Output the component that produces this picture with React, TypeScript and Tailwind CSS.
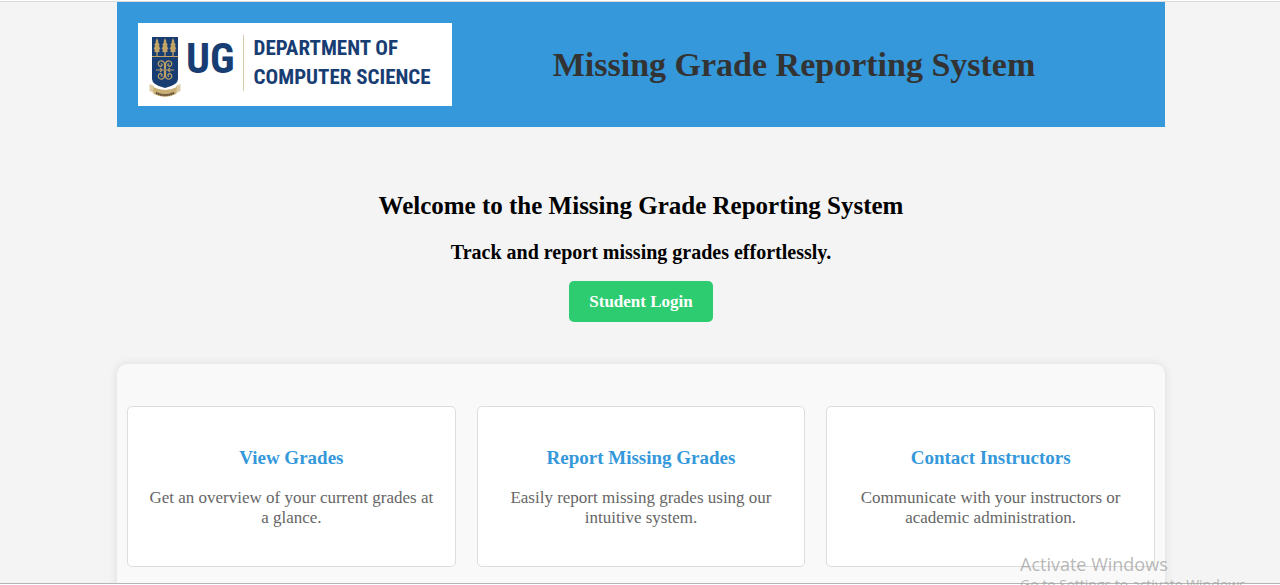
const features = [
  { title: 'View Grades', text: 'Get an overview of your current grades at a glance.' },
  { title: 'Report Missing Grades', text: 'Easily report missing grades using our intuitive system.' },
  { title: 'Contact Instructors', text: 'Communicate with your instructors or academic administration.' },
];

function Tree({ x }: { x: number }) {
  return (
    <path
      transform={`translate(${x} 0)`}
      fill="#c2a467"
      d="M0 2 L1.5 5.5 L1 6 L2.8 9 L1.8 9.600 L3.400 13 L2 13.400 L2.800 15.500 L0.600 16.500 V20 H-0.600 V16.500 L-2.800 15.500 L-2 13.400 L-3.400 13 L-1.800 9.600 L-2.800 9 L-1 6 L-1.500 5.500 Z"
    />
  );
}

function Crest() {
  return (
    <svg viewBox="0 0 32 62" className="mt-1 h-[62px] w-8 shrink-0" aria-hidden="true">
      <path d="M3 1 H29 V43 Q29 49 16 52 Q3 49 3 43 Z" fill="#173d73" />
      <Tree x={8} />
      <Tree x={16} />
      <Tree x={24} />
      <path d="M3 20.5 H29" stroke="#c2a467" strokeWidth="1" />
      <g fill="none" stroke="#c2a467" strokeWidth="1.2">
        <path d="M7 34 H25 M16 27 V42" />
        <path d="M15.5 33 V28 Q15 24.5 11.5 25 Q8.5 26 9.5 29 Q11 31.5 13 29.5 Q13.5 27.5 11.8 27.8" />
        <path d="M16.5 33 V28 Q17 24.5 20.5 25 Q23.5 26 22.5 29 Q21 31.5 19 29.5 Q18.5 27.5 20.2 27.8" />
        <path d="M15.5 35 V40 Q15 43.5 11.5 43 Q8.5 42 9.5 39 Q11 36.5 13 38.5 Q13.5 40.5 11.8 40.2" />
        <path d="M16.5 35 V40 Q17 43.5 20.5 43 Q23.5 42 22.5 39 Q21 36.5 19 38.5 Q18.5 40.5 20.2 40.2" />
        <path d="M11 32 Q14 34 11 36 M21 32 Q18 34 21 36" />
      </g>
      <path d="M0.5 48 L5 50 V58 L3 56 L0.5 55 Z M31.5 48 L27 50 V58 L29 56 L31.5 55 Z" fill="#dccba3" />
      <path d="M4 51 Q16 57 28 51 L27 58 Q16 64 5 58 Z" fill="#c9ae76" />
      <path d="M7 57 Q16 61 25 57" fill="none" stroke="#57482f" strokeWidth="2" strokeDasharray="1.6 0.5" />
    </svg>
  );
}

function Logo() {
  return (
    <div
      role="img"
      aria-label="UG Department of Computer Science"
      className="flex h-[83px] w-[314px] shrink-0 items-center bg-white pl-[11px] font-['Roboto_Condensed','Liberation_Sans_Narrow',sans-serif] text-[#173d73]"
    >
      <Crest />
      <div className="mb-3 ml-[5px] text-[42px] leading-[52px] font-bold">UG</div>
      <div className="mb-1 ml-2 h-14 w-px bg-[#d8c9a8]" />
      <div className="mb-1 ml-2.5 text-[21px] leading-[29px] font-bold whitespace-nowrap">
        <div>DEPARTMENT OF</div>
        <div>COMPUTER SCIENCE</div>
      </div>
    </div>
  );
}

export default function App() {
  return (
    <div className="flex h-screen flex-col overflow-hidden bg-white pt-px font-['Liberation_Serif',serif]">
      <div className="min-h-0 flex-1 overflow-hidden border-y border-t-[#d9dcdb] border-b-[#b5b5b5] bg-[#f4f4f4] pl-0.5">
        <div className="mx-auto w-[82%]">
          <header className="flex items-center bg-[#3498db] p-[21px]">
            <Logo />
            <h1 className="flex-1 pr-2 text-center text-[34px] leading-10 font-bold text-[#333]">
              Missing Grade Reporting System
            </h1>
          </header>
          <main>
            <section className="flex flex-col items-center pt-[65px] pb-[42px] text-center text-black">
              <h2 className="text-[25px] leading-7 font-bold">Welcome to the Missing Grade Reporting System</h2>
              <h3 className="mt-5 text-[20px] leading-6 font-bold">Track and report missing grades effortlessly.</h3>
              <a
                href="#login"
                className="mt-[17px] rounded-[5px] bg-[#2ecc71] px-5 py-2.5 text-[17px] leading-[21px] font-bold text-white"
              >
                Student Login
              </a>
            </section>
            <section className="grid grid-cols-3 gap-[21px] rounded-[10px] bg-[#f9f9f9] px-2.5 py-[42px] shadow-[0_0_10px_rgba(0,0,0,0.1)]">
              {features.map((feature) => (
                <article
                  key={feature.title}
                  className="rounded-[5px] border border-[#ddd] bg-white px-[21px] pt-10 pb-[38px] text-center"
                >
                  <h3 className="text-[19px] leading-[22px] font-bold text-[#3498db]">{feature.title}</h3>
                  <p className="mt-[19px] text-[17px] leading-5 text-[#666]">{feature.text}</p>
                </article>
              ))}
            </section>
          </main>
        </div>
      </div>
      <div className="h-px shrink-0" />
      <aside className="pointer-events-none absolute top-[553px] left-[1020px] h-8 overflow-hidden font-['Open_Sans',sans-serif] whitespace-nowrap text-[#999]/70">
        <p className="text-[18px] leading-[22px]">Activate Windows</p>
        <p className="text-[14px] leading-5">Go to Settings to activate Windows.</p>
      </aside>
    </div>
  );
}
